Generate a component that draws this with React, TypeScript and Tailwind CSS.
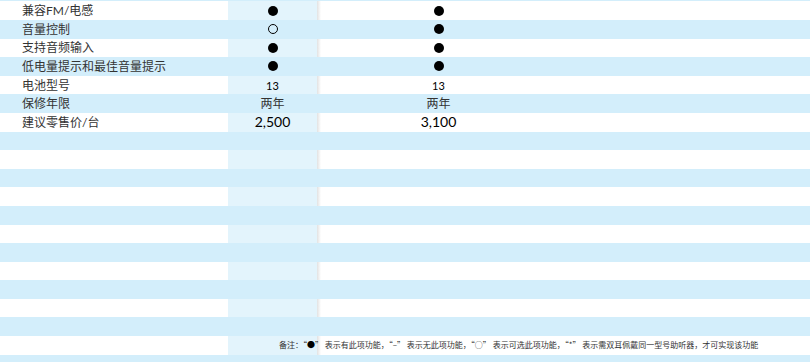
const FONT = { fontFamily: 'Lato, "Noto Sans CJK SC", sans-serif' };

type Cell = "dot" | "ring" | string;

const rows: { label: string; a: Cell; b: Cell; big?: boolean; small?: boolean }[] = [
	{ label: "兼容FM/电感", a: "dot", b: "dot" },
	{ label: "音量控制", a: "ring", b: "dot" },
	{ label: "支持音频输入", a: "dot", b: "dot" },
	{ label: "低电量提示和最佳音量提示", a: "dot", b: "dot" },
	{ label: "电池型号", a: "13", b: "13", small: true },
	{ label: "保修年限", a: "两年", b: "两年" },
	{ label: "建议零售价/台", a: "2,500", b: "3,100", big: true },
];

const white =
	"bg-[linear-gradient(to_right,#ffffff_228px,#e3f4fc_228px,#e3f4fc_317px,#e2e2e2_317px,#ffffff_321px)]";
const blue = "bg-[#d3eefb]";

function Value({ v, big, small }: { v: Cell; big?: boolean; small?: boolean }) {
	if (v === "dot") return <span className="block w-[10px] h-[10px] rounded-full bg-black" />;
	if (v === "ring")
		return <span className="block w-[10px] h-[10px] rounded-full border-[1.5px] border-black" />;
	return (
		<span
			className={
				big
					? "text-[14px] text-black leading-none"
					: small
					? "text-[11px] text-black leading-none"
					: "text-[12px] text-[#333] leading-none"
			}
		>
			{v}
		</span>
	);
}

export default function App() {
	const filler = Array.from({ length: 11 });
	return (
		<div className="w-[810px] h-[362px] overflow-hidden bg-[#d3eefb] pt-[1.4px]" style={FONT}>
			{rows.map((r, i) => (
				<div
					key={r.label}
					className={`flex items-center h-[18.6px] ${i % 2 === 0 ? white : blue}`}
				>
					<div className="w-[228px] pl-[22px] pt-[1px] text-[12px] text-[#333] leading-none">
						{r.label}
					</div>
					<div className="w-[89px] flex justify-center">
						<Value v={r.a} big={r.big} small={r.small} />
					</div>
					<div className="w-[240px] pl-[3px] flex justify-center">
						<Value v={r.b} big={r.big} small={r.small} />
					</div>
				</div>
			))}
			{filler.map((_, i) => (
				<div key={i} className={`h-[18.6px] ${i % 2 === 0 ? blue : white}`} />
			))}
			<div className={`flex items-center h-[18.6px] ${white}`}>
				<p
					className="pl-[279px] text-[8px] text-[#333] leading-none whitespace-nowrap"
					style={{ fontFamily: '"Noto Sans CJK SC", sans-serif' }}
				>
					备注：“<span className="text-black">●</span>” 表示有此项功能，“–” 表示无此项功能，“○” 表示可选此项功能，“*” 表示需双耳佩戴同一型号助听器，才可实现该功能
				</p>
			</div>
		</div>
	);
}
